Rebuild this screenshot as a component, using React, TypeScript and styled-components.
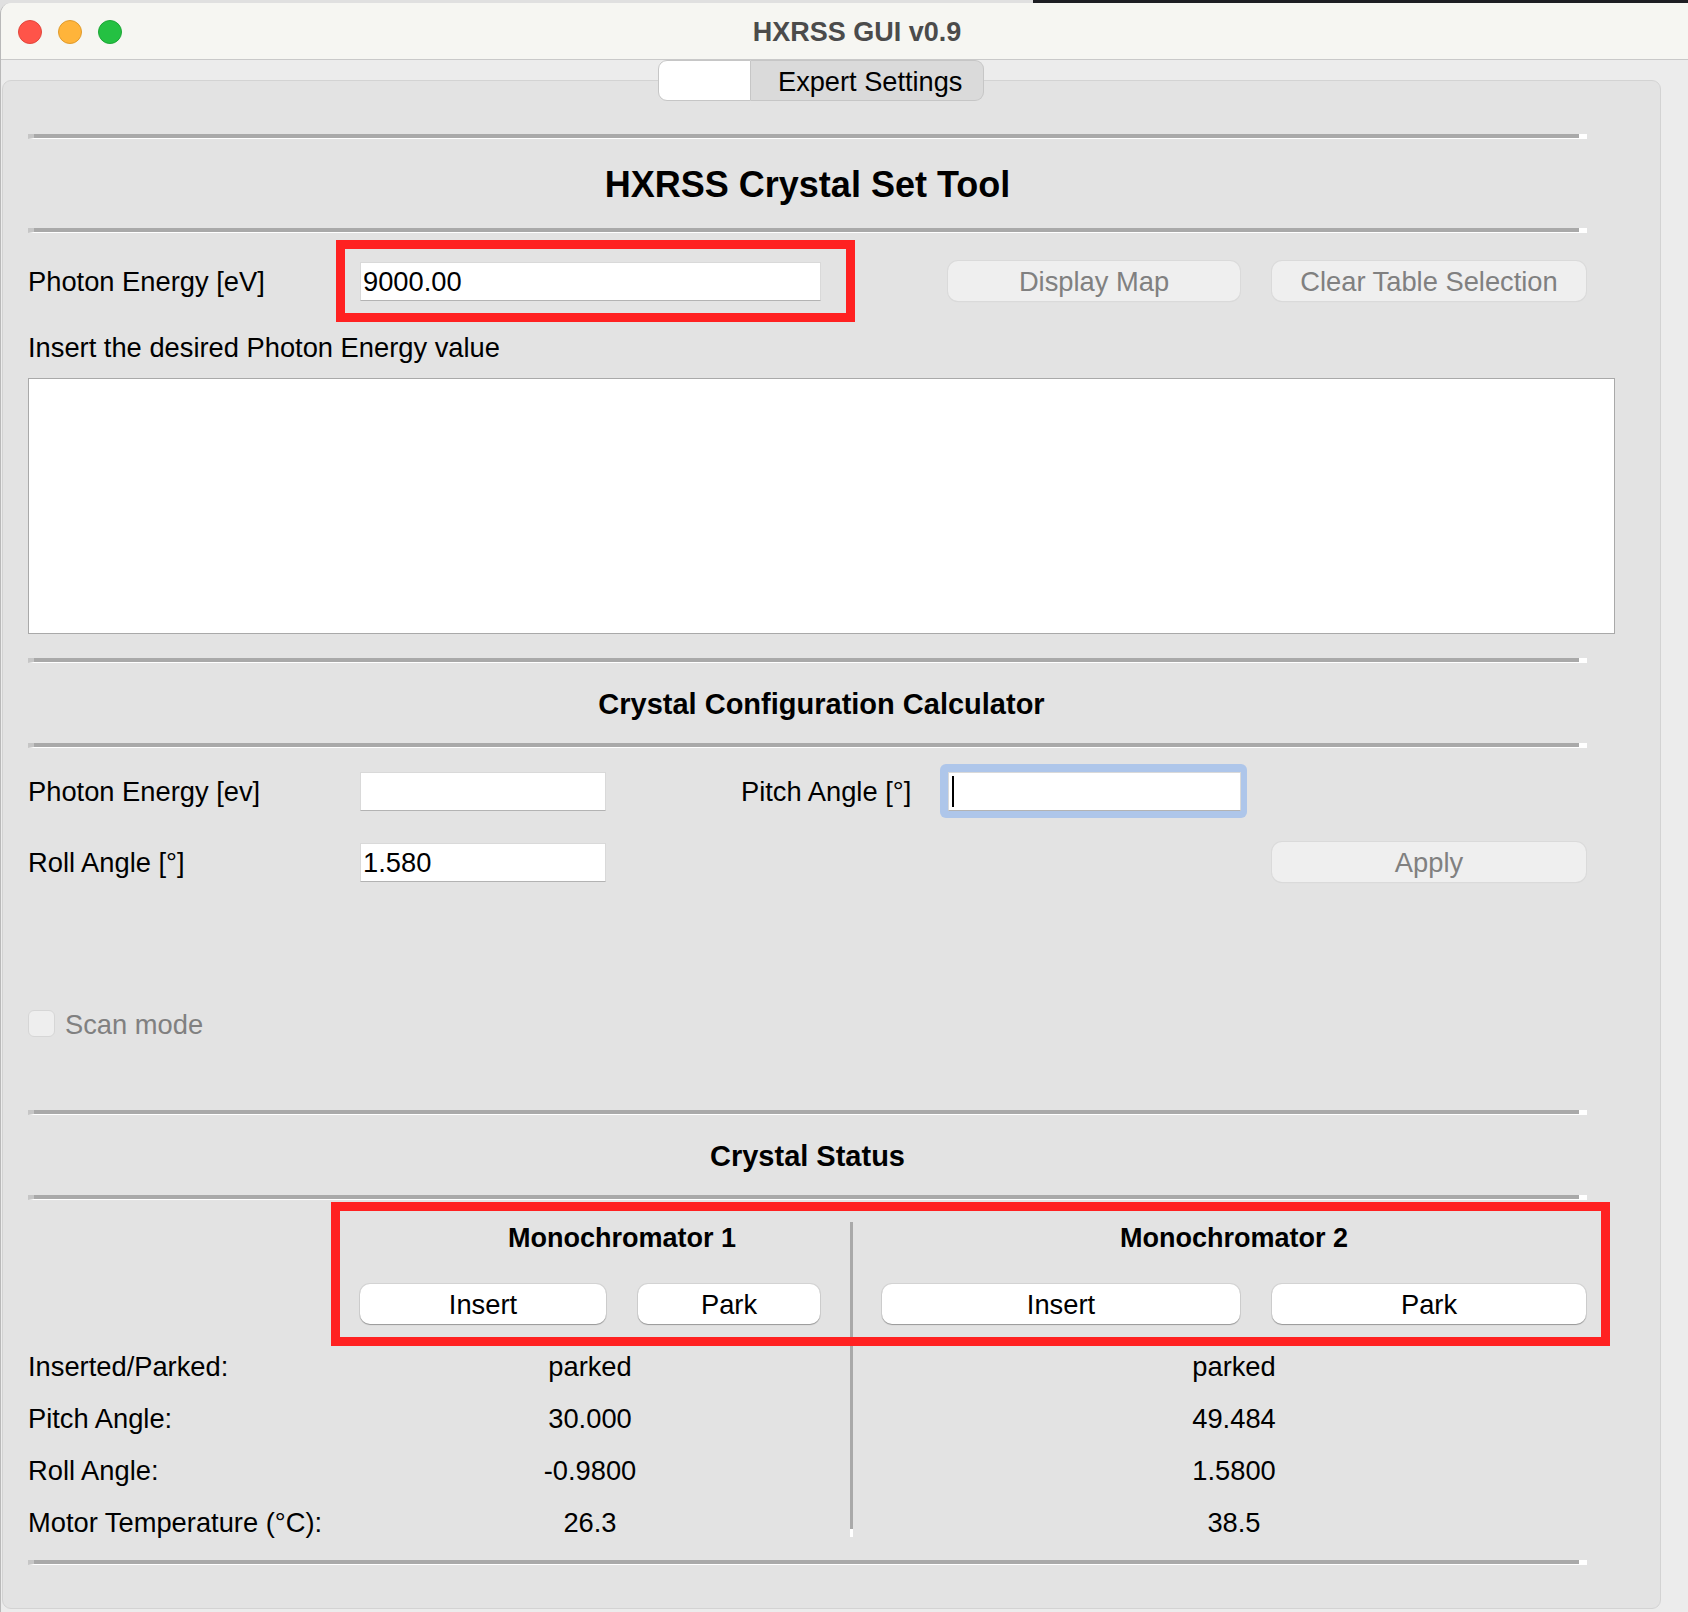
import React from 'react';
import styled, { createGlobalStyle } from 'styled-components';

const GlobalStyle = createGlobalStyle`
	html, body {
		margin: 0;
		padding: 0;
		background: #e0e0e0;
	}
	body {
		width: 1688px;
		height: 1612px;
		overflow: hidden;
		font-family: 'Liberation Sans', Arial, sans-serif;
		color: #000;
	}
	* {
		box-sizing: border-box;
	}
`;

const Desktop = styled.div`
	display: flex;
	flex-direction: column;
	width: 1688px;
	height: 1612px;
	background: #e0e0e0;
`;

const DesktopStrip = styled.div`
	height: 3px;
	display: flex;
	justify-content: flex-end;
	&::after {
		content: '';
		width: 655px;
		background: #1d1e23;
	}
`;

const Window = styled.div`
	flex: 1;
	display: flex;
	flex-direction: column;
	background: #ececec;
	border-left: 1px solid #b9b9b9;
	border-radius: 11px 0 0 0;
	overflow: hidden;
`;

const TitleBar = styled.div`
	height: 57px;
	flex-shrink: 0;
	display: grid;
	grid-template-columns: 1fr auto 1fr;
	align-items: center;
	padding-left: 17px;
	background: #f6f6f2;
	border-bottom: 1px solid #c9c9c9;
`;

const Lights = styled.div`
	display: flex;
	gap: 16px;
	padding-top: 2px;
`;

const Light = styled.span<{ $fill: string; $edge: string }>`
	width: 24px;
	height: 24px;
	border-radius: 50%;
	background: ${(p) => p.$fill};
	border: 1px solid ${(p) => p.$edge};
`;

const WindowTitle = styled.div`
	padding: 2px 0 0 8px;
	font-size: 27px;
	font-weight: 700;
	color: #4b4b4b;
`;

const TabRow = styled.div`
	height: 41px;
	flex-shrink: 0;
	display: flex;
	padding-left: 657px;
	position: relative;
	z-index: 1;
`;

const Tab = styled.div<{ $active?: boolean }>`
	height: 41px;
	display: flex;
	align-items: center;
	padding-top: 2px;
	font-size: 27.2px;
	border: 1px solid #c6c6c6;
	background: ${(p) => (p.$active ? '#ffffff' : '#dadada')};
	border-radius: ${(p) => (p.$active ? '9px 0 0 9px' : '0 9px 9px 0')};
	${(p) => (p.$active ? 'width: 93px;' : 'width: 233px; padding-left: 27px; border-left: none;')}
`;

const Panel = styled.div`
	margin: -21px 0 3px 1px;
	width: 1659px;
	flex: 1;
	background: #e3e3e3;
	border: 1px solid #d3d3d3;
	border-radius: 9px;
	padding: 53px 0 0 25px;
	display: flex;
	flex-direction: column;
	font-size: 27.3px;
`;

const Separator = styled.div<{ $mt?: number }>`
	margin-top: ${(p) => p.$mt ?? 0}px;
	width: 1559px;
	height: 5px;
	flex-shrink: 0;
	background: #a9a9a9;
	border-left: 6px solid #c6c6c6;
	border-right: 8px solid #ffffff;
	border-bottom: 1px solid #ffffff;
`;

const SectionTitle = styled.div<{ $h: number; $size: number; $w?: number }>`
	height: ${(p) => p.$h}px;
	width: ${(p) => p.$w ?? 1559}px;
	display: flex;
	align-items: center;
	justify-content: center;
	padding-top: 2px;
	font-weight: 700;
	font-size: ${(p) => p.$size}px;
`;

const Row = styled.div<{ $mt: number; $h: number }>`
	margin-top: ${(p) => p.$mt}px;
	height: ${(p) => p.$h}px;
	display: flex;
	align-items: center;
`;

const Label = styled.div<{ $w?: number; $ml?: number }>`
	width: ${(p) => p.$w ?? 332}px;
	margin-left: ${(p) => p.$ml ?? 0}px;
	padding-top: 2px;
	white-space: nowrap;
`;

const FieldCell = styled.div<{ $w: number }>`
	position: relative;
	width: ${(p) => p.$w}px;
`;

const Field = styled.div<{ $w?: number }>`
	width: ${(p) => (p.$w ? p.$w + 'px' : '100%')};
	height: 39px;
	background: #ffffff;
	border: 1px solid #d9d9d9;
	border-bottom-color: #b3b3b3;
	padding: 2px 0 0 2px;
	display: flex;
	align-items: center;
	line-height: 1;
`;

const Caret = styled.span`
	width: 2px;
	height: 31px;
	margin: -2px 0 0 1px;
	background: #000;
`;

const FocusRing = styled.div`
	width: 307px;
	height: 54px;
	padding: 8px 6px 7px 8px;
	background: #aec6ea;
	border-radius: 6px;
`;

const Annotation = styled.div<{ $top: number; $left: number; $w: number; $h: number }>`
	position: absolute;
	top: ${(p) => p.$top}px;
	left: ${(p) => p.$left}px;
	width: ${(p) => p.$w}px;
	height: ${(p) => p.$h}px;
	border: 9px solid #ff2121;
	pointer-events: none;
`;

const Button = styled.button<{ $w: number; $ml?: number; $light?: boolean }>`
	width: ${(p) => p.$w}px;
	margin-left: ${(p) => p.$ml ?? 0}px;
	height: 40px;
	padding: 2px 0 0;
	font-family: 'Liberation Sans', Arial, sans-serif;
	font-size: 27.3px;
	border: none;
	border-radius: 10px;
	background: ${(p) => (p.$light ? '#ffffff' : '#efefef')};
	color: ${(p) => (p.$light ? '#000000' : '#808080')};
	box-shadow: ${(p) =>
		p.$light
			? '0 0 0 1px rgba(0,0,0,0.07), 0 1px 1px rgba(0,0,0,0.28)'
			: '0 0 0 1px #dadada, 0 1px 1px rgba(0,0,0,0.08)'};
`;

const Hint = styled.div`
	margin-top: 10px;
	height: 32px;
	line-height: 32px;
`;

const BigBox = styled.div`
	margin-top: 14px;
	width: 1587px;
	height: 256px;
	flex-shrink: 0;
	background: #ffffff;
	border: 1px solid #a9a9a9;
`;

const CheckRow = styled.div`
	margin-top: 128px;
	height: 27px;
	display: flex;
	align-items: center;
	gap: 10px;
	color: #808080;
`;

const CheckBox = styled.span`
	width: 27px;
	height: 27px;
	border-radius: 6px;
	background: #eeeeee;
	border: 1px solid #d6d6d6;
`;

const CheckText = styled.span`
	padding-top: 2px;
`;

const StatusArea = styled.div`
	position: relative;
	padding-top: 12px;
	display: grid;
	grid-template-columns: 332px 460px 62px 704px;
	grid-template-rows: 50px 78px 52px 52px 52px 52px;
	align-items: center;
`;

const MonoHeader = styled.div<{ $pl?: number }>`
	padding: 2px 0 0 ${(p) => p.$pl ?? 0}px;
	text-align: center;
	font-weight: 700;
	font-size: 27px;
`;

const ButtonPair = styled.div`
	align-self: start;
	margin-top: 22px;
	display: flex;
	gap: 32px;
`;

const Value = styled.div<{ $col: number }>`
	grid-column: ${(p) => p.$col};
	padding-top: 2px;
	text-align: center;
`;

const VDivider = styled.div`
	grid-column: 3;
	grid-row: 1 / -1;
	align-self: stretch;
	justify-self: center;
	width: 3px;
	margin: 10px 0 11px;
	background: #a9a9a9;
	border-bottom: 8px solid #ffffff;
`;

const statusRows: [string, string, string][] = [
	['Inserted/Parked:', 'parked', 'parked'],
	['Pitch Angle:', '30.000', '49.484'],
	['Roll Angle:', '-0.9800', '1.5800'],
	['Motor Temperature (°C):', '26.3', '38.5'],
];

export default function App() {
	return (
		<>
			<GlobalStyle />
			<Desktop>
				<DesktopStrip />
				<Window>
					<TitleBar>
						<Lights>
							<Light $fill="#ff5449" $edge="#e2463c" />
							<Light $fill="#ffb43a" $edge="#e09b2c" />
							<Light $fill="#24c142" $edge="#1ca636" />
						</Lights>
						<WindowTitle>HXRSS GUI v0.9</WindowTitle>
						<div />
					</TitleBar>

					<TabRow>
						<Tab $active />
						<Tab>Expert Settings</Tab>
					</TabRow>

					<Panel>
						{/* Crystal set tool */}
						<Separator />
						<SectionTitle $h={89} $size={36}>
							HXRSS Crystal Set Tool
						</SectionTitle>
						<Separator />
						<Row $mt={7} $h={82}>
							<Label>Photon Energy [eV]</Label>
							<FieldCell $w={461}>
								<Field>9000.00</Field>
								<Annotation $top={-22} $left={-24} $w={519} $h={82} />
							</FieldCell>
							<Button $w={292} $ml={127} disabled>
								Display Map
							</Button>
							<Button $w={314} $ml={32} disabled>
								Clear Table Selection
							</Button>
						</Row>
						<Hint>Insert the desired Photon Energy value</Hint>
						<BigBox />

						{/* Configuration calculator */}
						<Separator $mt={24} />
						<SectionTitle $h={80} $size={29} $w={1587}>
							Crystal Configuration Calculator
						</SectionTitle>
						<Separator />
						<Row $mt={16} $h={54}>
							<Label>Photon Energy [ev]</Label>
							<Field $w={246} />
							<Label $w={199} $ml={135}>
								Pitch Angle [°]
							</Label>
							<FocusRing>
								<Field>
									<Caret />
								</Field>
							</FocusRing>
						</Row>
						<Row $mt={24} $h={40}>
							<Label>Roll Angle [°]</Label>
							<Field $w={246}>1.580</Field>
							<Button $w={314} $ml={666} disabled>
								Apply
							</Button>
						</Row>
						<CheckRow>
							<CheckBox />
							<CheckText>Scan mode</CheckText>
						</CheckRow>

						{/* Status */}
						<Separator $mt={73} />
						<SectionTitle $h={80} $size={29}>
							Crystal Status
						</SectionTitle>
						<Separator />
						<StatusArea>
							<div />
							<MonoHeader $pl={64}>Monochromator 1</MonoHeader>
							<VDivider />
							<MonoHeader>Monochromator 2</MonoHeader>

							<div />
							<ButtonPair>
								<Button $w={246} $light>
									Insert
								</Button>
								<Button $w={182} $light>
									Park
								</Button>
							</ButtonPair>
							<ButtonPair>
								<Button $w={358} $light>
									Insert
								</Button>
								<Button $w={314} $light>
									Park
								</Button>
							</ButtonPair>

							{statusRows.map(([label, m1, m2]) => (
								<React.Fragment key={label}>
									<Label>{label}</Label>
									<Value $col={2}>{m1}</Value>
									<Value $col={4}>{m2}</Value>
								</React.Fragment>
							))}
							<Annotation $top={2} $left={303} $w={1279} $h={144} />
						</StatusArea>
						<Separator $mt={12} />
					</Panel>
				</Window>
			</Desktop>
		</>
	);
}
